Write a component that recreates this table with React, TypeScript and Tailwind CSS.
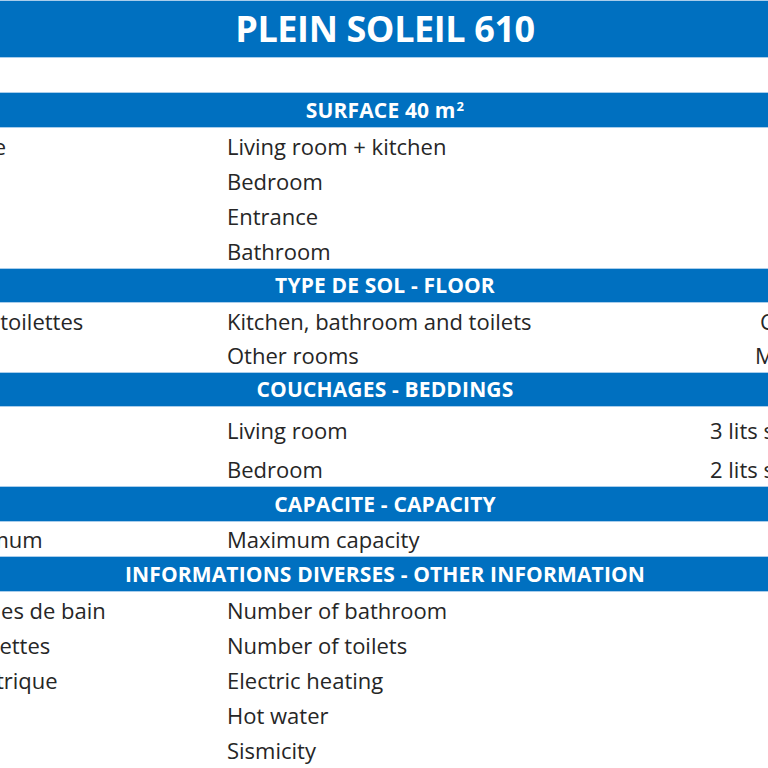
type Row = {
  fr: string;
  en: string;
  val?: string;
  valPad?: string;
  h?: string;
};

type Section = {
  title: React.ReactNode;
  h?: string;
  rows: Row[];
};

const sections: Section[] = [
  {
    title: (
      <>
        SURFACE 40 m
        <span className="relative -top-[7px] ml-[1px] text-[13px]">2</span>
      </>
    ),
    rows: [
      { fr: "Séjour + cuisine", en: "Living room + kitchen" },
      { fr: "Chambre", en: "Bedroom" },
      { fr: "Entrée", en: "Entrance" },
      { fr: "Salle de bain", en: "Bathroom" },
    ],
  },
  {
    title: "TYPE DE SOL - FLOOR",
    h: "h-[35px]",
    rows: [
      {
        fr: "Cuisine, sdb et toilettes",
        en: "Kitchen, bathroom and toilets",
        val: "Carrelage",
        valPad: "pl-[60px]",
      },
      {
        fr: "Autres pièces",
        en: "Other rooms",
        val: "Moquette",
        valPad: "pl-[55px]",
        h: "h-[34px]",
      },
    ],
  },
  {
    title: "COUCHAGES - BEDDINGS",
    h: "h-[35px]",
    rows: [
      {
        fr: "Séjour",
        en: "Living room",
        val: "3 lits simples",
        valPad: "pl-[10px]",
        h: "h-[40px]",
      },
      {
        fr: "Chambre",
        en: "Bedroom",
        val: "2 lits simples",
        valPad: "pl-[10px]",
        h: "h-[39px]",
      },
    ],
  },
  {
    title: "CAPACITE - CAPACITY",
    rows: [{ fr: "Capacité maximum", en: "Maximum capacity", h: "h-[34px]" }],
  },
  {
    title: "INFORMATIONS DIVERSES - OTHER INFORMATION",
    rows: [
      { fr: "Nombre de salles de bain", en: "Number of bathroom" },
      { fr: "Nombre de toilettes", en: "Number of toilets" },
      { fr: "Chauffage électrique", en: "Electric heating" },
      { fr: "Eau chaude", en: "Hot water" },
      { fr: "Sismicité", en: "Sismicity" },
    ],
  },
];

function Bar({ children, h }: { children: React.ReactNode; h?: string }) {
  return (
    <div
      className={`flex items-center justify-center border-y border-[#a9cdeb] bg-[#0070c0] text-[21px] font-bold tracking-[0.15px] text-white ${h ?? "h-[36px]"}`}
    >
      <span className="leading-none">{children}</span>
    </div>
  );
}

function Line({ row }: { row: Row }) {
  return (
    <div
      className={`grid grid-cols-[382px_477px_229px] items-end whitespace-nowrap pb-[4px] text-[22px] leading-[26px] text-[#262626] ${row.h ?? "h-[35px]"}`}
    >
      <div className="pl-[4px]">{row.fr}</div>
      <div className="pl-[4px]">{row.en}</div>
      <div className={row.valPad}>{row.val}</div>
    </div>
  );
}

export default function App() {
  return (
    <div className="h-[768px] w-[768px] overflow-hidden bg-white font-['Open_Sans',sans-serif]">
      <div className="-ml-[159px] w-[1088px]">
        <div className="flex h-[58px] items-center justify-center border-y border-[#a9cdeb] bg-[#0070c0] text-[36px] font-bold tracking-[-0.4px] text-white">
          PLEIN SOLEIL 610
        </div>
        <div className="h-[34px]" />
        {sections.map((s, i) => (
          <div key={i}>
            <Bar h={s.h}>{s.title}</Bar>
            {s.rows.map((r) => (
              <Line key={r.en} row={r} />
            ))}
          </div>
        ))}
      </div>
    </div>
  );
}
